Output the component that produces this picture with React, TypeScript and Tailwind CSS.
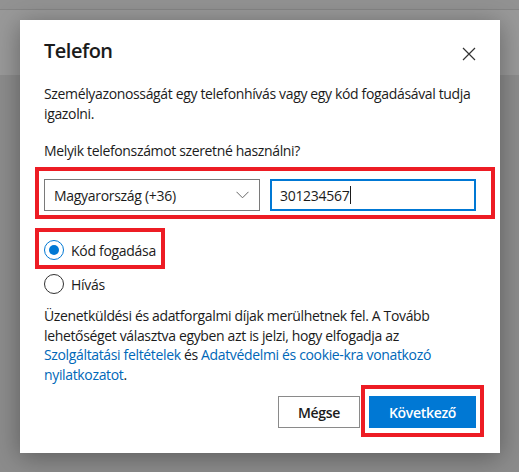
import React from 'react';

const font = { fontFamily: '"Open Sans", "Noto Sans", Arial, sans-serif' };

function Radio({ checked, label }: { checked?: boolean; label: string }) {
  return (
    <label className="flex items-center gap-[7px] h-[20px]">
      <span
        className={`flex h-[20px] w-[20px] items-center justify-center rounded-full border bg-white ${
          checked ? 'border-[#0078d4]' : 'border-[#323232]'
        }`}
      >
        {checked && <span className="h-[10px] w-[10px] rounded-full bg-[#0078d4]" />}
      </span>
      <span className="text-[14px] tracking-[-0.3px] text-[#1b1b1b]">{label}</span>
    </label>
  );
}

export default function App() {
  return (
    <div className="relative h-[472px] w-[519px] overflow-hidden bg-[#8c8c8c]" style={font}>
      {/* page behind the overlay */}
      <div className="h-[9px] bg-[#929292]" />
      <div className="h-[66px] border-t border-[#858585] bg-[#999999]" />

      <div className="absolute left-[20px] top-[20px] h-[433px] w-[480px] bg-white px-[24px] shadow-[0_4px_24px_rgba(0,0,0,0.35)]">
        <div className="flex items-center justify-between pt-[17px]">
          <h1 className="text-[20px] font-semibold leading-[28px] tracking-[-0.5px] text-[#1b1b1b]">Telefon</h1>
          <svg width="14" height="14" viewBox="0 0 14 14" className="mt-[6px]">
            <path d="M1 1L13 13M13 1L1 13" stroke="#333" strokeWidth="1.2" />
          </svg>
        </div>

        <div className="text-[14px] tracking-[-0.35px] text-[#1b1b1b]">
          <p className="mt-[19px] leading-[20px]">
            Személyazonosságát egy telefonhívás vagy egy kód fogadásával tudja igazolni.
          </p>
          <p className="mt-[17px] leading-[20px]">Melyik telefonszámot szeretné használni?</p>
        </div>

        <div className="mt-[18px] flex gap-[10px] text-[14px] tracking-[-0.3px]">
          <div className="flex h-[32px] w-[216px] items-center justify-between border border-[#7a7a7a] pl-[9px] pr-[10px]">
            <span className="text-[#1b1b1b]">Magyarország (+36)</span>
            <svg width="13" height="8" viewBox="0 0 13 8">
              <path d="M0.5 0.8L6.5 6.8L12.5 0.8" fill="none" stroke="#666" strokeWidth="1" />
            </svg>
          </div>
          <div className="flex h-[32px] flex-1 items-center border-2 border-[#0078d4] pl-[8px]">
            <span className="text-[#1b1b1b]">301234567</span>
            <span className="ml-[1px] h-[18px] w-px bg-[#1b1b1b]" />
          </div>
        </div>

        <div className="mt-[29px] flex flex-col gap-[14px]">
          <Radio checked label="Kód fogadása" />
          <Radio label="Hívás" />
        </div>

        <p className="mt-[12px] text-[14px] leading-[19.5px] tracking-[-0.35px] text-[#1b1b1b]">
          Üzenetküldési és adatforgalmi díjak merülhetnek fel. A Tovább lehetőséget választva egyben azt is jelzi, hogy
          elfogadja az <a className="text-[#0067b8]">Szolgáltatási feltételek</a> és{' '}
          <a className="text-[#0067b8]">Adatvédelmi és cookie-kra vonatkozó</a>{' '}
          <a className="text-[#0067b8]">nyilatkozatot</a>.
        </p>

        <div className="mt-[12px] flex justify-end gap-[9px]">
          <button className="h-[32px] w-[82px] border border-[#8a8a8a] bg-white text-[14px] font-semibold tracking-[-0.3px] text-[#1b1b1b]">
            Mégse
          </button>
          <button className="h-[32px] w-[107px] bg-[#0078d4] text-[14px] font-semibold tracking-[-0.3px] text-white">
            Következő
          </button>
        </div>

        {/* red annotation boxes */}
        <div className="pointer-events-none absolute left-[15px] top-[147px] h-[52px] w-[460px] border-4 border-[#ed1c24]" />
        <div className="pointer-events-none absolute left-[15px] top-[208px] h-[41px] w-[130px] border-4 border-[#ed1c24]" />
        <div className="pointer-events-none absolute left-[341px] top-[365px] h-[52px] w-[123px] border-4 border-[#ed1c24]" />
      </div>
    </div>
  );
}
